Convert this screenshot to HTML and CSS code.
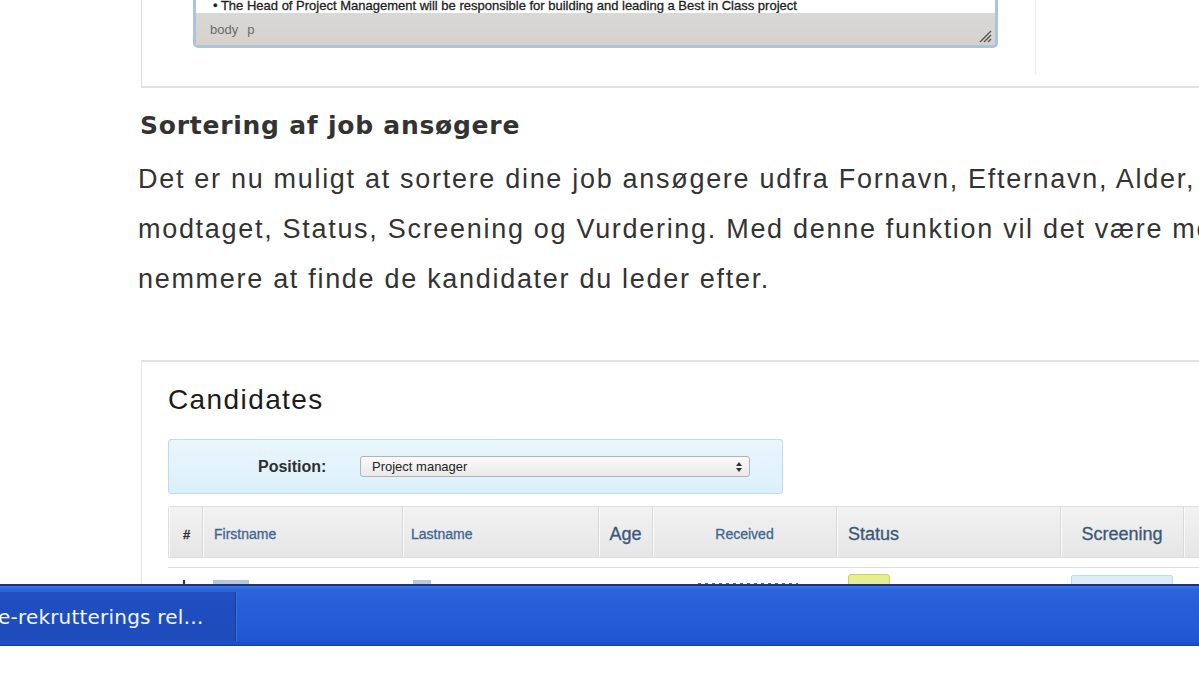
FILE: index.html
```html
<!DOCTYPE html>
<html lang="da">
<head>
<meta charset="utf-8">
<title>Sortering af job ansøgere</title>
<link rel="stylesheet" href="styles.css">
</head>
<body>
<div class="screen">
  <div class="content">
    <div class="shot-top">
      <div class="top-main">
        <div class="editor">
          <div class="editor-text"><span>• The Head of Project Management will be responsible for building and leading a Best in Class project</span></div>
          <div class="editor-status">
            <span class="path">body</span><span class="path">p</span>
            <svg class="grip" width="14" height="14" viewBox="0 0 14 14"><path d="M13 2 L2 13 M13 6 L6 13 M13 10 L10 13" stroke="#555" stroke-width="1.4" fill="none"/></svg>
          </div>
        </div>
      </div>
      <div class="top-side"></div>
    </div>

    <h2 class="title">Sortering af job ansøgere</h2>
    <p class="lead">Det er nu muligt at sortere dine job ansøgere udfra Fornavn, Efternavn, Alder, Dato<br>modtaget, Status, Screening og Vurdering. Med denne funktion vil det være meget<br>nemmere at finde de kandidater du leder efter.</p>

    <div class="shot-cand">
      <h3 class="cand-title">Candidates</h3>
      <div class="filter">
        <span class="filter-label">Position:</span>
        <div class="select">
          <span>Project manager</span>
          <svg class="arrows" width="8" height="12" viewBox="0 0 8 12"><path d="M4 1 L7 5 H1 Z M4 11 L7 7 H1 Z" fill="#333"/></svg>
        </div>
      </div>
      <div class="thead">
        <div class="th hash">#</div>
        <div class="th link">Firstname</div>
        <div class="th link ln">Lastname</div>
        <div class="th big center">Age</div>
        <div class="th link center">Received</div>
        <div class="th big">Status</div>
        <div class="th big center">Screening</div>
        <div class="th"></div>
      </div>
      <div class="trow">
        <div class="td num"><span class="stub dark"></span></div>
        <div class="td name"><span class="stub w40"></span></div>
        <div class="td name"><span class="stub w20"></span></div>
        <div class="td"></div>
        <div class="td date"><span class="stub w100"></span></div>
        <div class="td"><span class="badge"></span></div>
        <div class="td"><span class="score"></span></div>
        <div class="td"></div>
      </div>
    </div>
  </div>
  <div class="taskbar">
    <div class="task-btn"><span>e-rekrutterings rel…</span></div>
  </div>
  <div class="below"></div>
</div>
</body>
</html>
```
FILE: styles.css
```css
html, body {
  margin: 0;
  padding: 0;
  background: #fff;
  overflow: hidden;
}

.screen {
  width: 1199px;
  height: 675px;
  display: flex;
  flex-direction: column;
}

.content {
  height: 584px;
  overflow: hidden;
  flex: none;
}

/* top screenshot card */
.shot-top {
  margin-left: 141px;
  width: 1100px;
  height: 86px;
  border-left: 1px solid #dcdcdc;
  border-bottom: 2px solid #e2e2e2;
  display: flex;
}

.top-main {
  width: 842px;
  height: 74px;
  padding-left: 51px;
  border-right: 1px solid #ececec;
}

.editor {
  width: 799px;
  height: 45px;
  border: 3px solid #a9c5dd;
  border-top: none;
  border-radius: 0 0 5px 5px;
  display: flex;
  flex-direction: column;
  overflow: hidden;
}

.editor-text {
  height: 13px;
  background: #fff;
  overflow: hidden;
  padding-left: 17px;
  margin-right: 12px;
}

.editor-text span {
  display: block;
  margin-top: -2px;
  font: 13px/15px "Liberation Sans", Arial, sans-serif;
  color: #1e1e1e;
  white-space: nowrap;
  -webkit-text-stroke: 0.3px #1e1e1e;
}

.editor-status {
  flex: 1;
  background: linear-gradient(#d8d8d6, #d6d4d0 70%, #d9cfc8);
  display: flex;
  align-items: center;
  gap: 9px;
  padding-left: 14px;
}

.path {
  font: 13px "Liberation Sans", Arial, sans-serif;
  color: #6a6a6a;
}

.grip {
  margin-left: auto;
  margin-right: 3px;
  margin-top: 14px;
}

.top-side {
  flex: 1;
}

/* article */
.title {
  margin: 23px 0 0 140px;
  font: bold 25px/30px "DejaVu Sans", Verdana, sans-serif;
  letter-spacing: 0.75px;
  color: #333;
}

.lead {
  margin: 13px 0 0 138px;
  font: 27px/50px "Liberation Sans", Arial, sans-serif;
  letter-spacing: 1.7px;
  color: #333;
  white-space: nowrap;
}

/* candidates screenshot */
.shot-cand {
  margin: 56px 0 0 141px;
  width: 1100px;
  border-top: 2px solid #e3e3e3;
  border-left: 1px solid #e6e6e6;
  padding-left: 26px;
}

.cand-title {
  margin: 20px 0 0;
  font: normal 28px/36px "Liberation Sans", Arial, sans-serif;
  letter-spacing: 1.4px;
  color: #1c1c1c;
}

.filter {
  margin-top: 21px;
  width: 613px;
  height: 53px;
  border: 1px solid #bcdbec;
  border-radius: 3px;
  background: linear-gradient(#e9f6fd, #dcf0fa);
  display: flex;
  align-items: center;
}

.filter-label {
  margin-left: 89px;
  width: 102px;
  font: bold 16px "Liberation Sans", Arial, sans-serif;
  color: #2f2f2f;
}

.select {
  width: 377px;
  height: 19px;
  border: 1px solid #b3b3b3;
  border-radius: 3px;
  background: linear-gradient(#fafafa, #e9e9e9);
  display: flex;
  align-items: center;
  padding-left: 11px;
}

.select span {
  font: 13px "Liberation Sans", Arial, sans-serif;
  color: #222;
}

.arrows {
  margin-left: auto;
  margin-right: 6px;
}

.thead,
.trow {
  display: grid;
  grid-template-columns: 34px 200px 196px 54px 184px 224px 123px 1fr;
}

.thead {
  margin-top: 12px;
  height: 50px;
  border: 1px solid #dedede;
  border-right: none;
  border-radius: 3px 0 0 0;
  background: linear-gradient(#f2f2f2, #e6e6e6);
}

.th {
  display: flex;
  align-items: center;
  border-right: 1px solid #d9d9d9;
  box-shadow: inset 1px 0 0 #fafafa;
  font: 14px "Liberation Sans", Arial, sans-serif;
  color: #3e6690;
  -webkit-text-stroke: 0.3px currentColor;
  padding-left: 11px;
  padding-top: 4px;
}

.th.ln {
  padding-left: 8px;
}

.th.hash {
  padding-left: 14px;
  color: #333;
  font-weight: bold;
  font-size: 13px;
}

.th.big {
  font-size: 18px;
  color: #3a5878;
}

.th.center {
  justify-content: center;
  padding-left: 0;
}

.trow {
  margin-top: 9px;
  border-top: 1px solid #dddddd;
  height: 40px;
}

.td {
  padding-top: 12px;
}

.td.num {
  padding-left: 15px;
}

.td.name {
  padding-left: 11px;
}

.td.date {
  padding-left: 46px;
  padding-top: 13px;
}

.stub {
  display: block;
  height: 6px;
  width: 2px;
  background: #b8c6d8;
}

.stub.dark {
  background: #333;
}

.stub.w20 { width: 18px; }
.stub.w40 { width: 36px; }
.stub.w100 {
  width: 100px;
  height: 4px;
  margin-top: 2px;
  background: repeating-linear-gradient(90deg, #5a6478 0 3px, transparent 3px 7px);
}

.badge {
  display: block;
  margin-left: 12px;
  margin-top: -6px;
  width: 40px;
  height: 16px;
  background: #e6ee8f;
  border: 1px solid #c9d35c;
  border-radius: 3px;
}

.score {
  display: block;
  margin-left: 11px;
  margin-top: -5px;
  width: 100px;
  height: 20px;
  background: #dcedf8;
  border: 1px solid #c3d8e6;
  border-radius: 2px;
}

/* windows taskbar */
.taskbar {
  flex: none;
  height: 62px;
  box-sizing: border-box;
  border-top: 2px solid #1a3480;
  border-bottom: 1px solid #1a3f9e;
  background: linear-gradient(#3d77e6 0, #2b64dc 4px, #255cd7 50%, #2157d2 90%, #1d4cbc 100%);
  padding-top: 6px;
}

.task-btn {
  width: 235px;
  height: 49px;
  background: linear-gradient(#1f4fc2, #1d4bbb);
  border-right: 1px solid #17399a;
  box-shadow: 1px 0 0 #3a74e0;
  display: flex;
  align-items: center;
  overflow: hidden;
}

.task-btn span {
  margin-left: -2px;
  font: 20px "DejaVu Sans", Tahoma, sans-serif;
  letter-spacing: 0.2px;
  color: #f4f7ff;
  white-space: nowrap;
}

.below {
  flex: 1;
  background: #fff;
}
```
